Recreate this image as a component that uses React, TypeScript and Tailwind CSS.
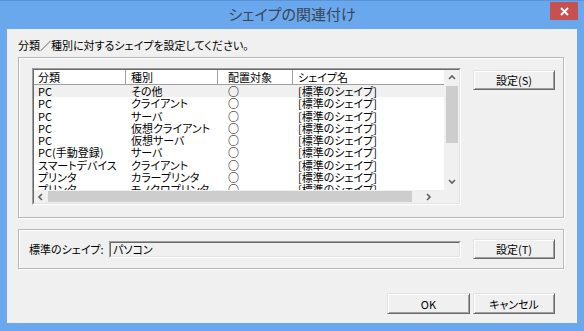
const rows = [
  { cat: 'PC', kind: 'その他' },
  { cat: 'PC', kind: 'クライアント' },
  { cat: 'PC', kind: 'サーバ' },
  { cat: 'PC', kind: '仮想クライアント' },
  { cat: 'PC', kind: '仮想サーバ' },
  { cat: 'PC(手動登録)', kind: 'サーバ' },
  { cat: 'スマートデバイス', kind: 'クライアント' },
  { cat: 'プリンタ', kind: 'カラープリンタ' },
  { cat: 'プリンタ', kind: 'モノクロプリンタ' },
]

const font = "font-['Noto_Sans_CJK_JP','Noto_Sans_CJK_SC',sans-serif] [font-feature-settings:'palt']"

function Chevron({ dir }: { dir: 'up' | 'down' | 'left' | 'right' }) {
  const d = {
    up: 'M1 5 L4 2 L7 5',
    down: 'M1 2 L4 5 L7 2',
    left: 'M5 1 L2 4 L5 7',
    right: 'M3 1 L6 4 L3 7',
  }[dir]
  return (
    <svg width="8" height="8" viewBox="0 0 8 8">
      <path d={d} fill="none" stroke="#606060" strokeWidth="1.6" />
    </svg>
  )
}

function Button({ label, w, h }: { label: string; w: string; h: string }) {
  return (
    <div
      className={`${w} ${h} flex items-center justify-center bg-[#f0f0f0] border border-t-[#e3e3e3] border-l-[#e3e3e3] border-r-[#696969] border-b-[#696969] shadow-[inset_1px_1px_0_#fff,inset_-1px_-1px_0_#a0a0a0] text-[11px] leading-[12px] text-black`}
    >
      {label}
    </div>
  )
}

export default function App() {
  return (
    <div className={`w-[584px] h-[331px] bg-[#6aa8ee] border-t border-[#5a92d8] flex flex-col ${font}`}>
      {/* Title bar */}
      <div className="relative h-[28px] flex items-center justify-center">
        <span className="text-[15px] text-[#3a4452] pb-[1px]">シェイプの関連付け</span>
        <div className="absolute right-[6px] top-[1px] w-[28px] h-[18px] bg-[#c75050] flex items-center justify-center">
          <svg width="9" height="9" viewBox="0 0 9 9">
            <path d="M1 1 L8 8 M8 1 L1 8" stroke="#fff" strokeWidth="2" />
          </svg>
        </div>
      </div>

      {/* Client area */}
      <div className="mx-[7px] mb-[8px] flex-1 bg-[#f0f0f0] flex flex-col text-[11px] leading-[12px] text-black">
        <div className="h-[28px] pt-[10px] pl-[11px] whitespace-nowrap">分類／種別に対するシェイプを設定してください。</div>

        {/* Group 1 */}
        <div className="ml-[11px] w-[546px] h-[161px] border border-[#b8b8b8] shadow-[inset_1px_1px_0_#fff,1px_1px_0_#fff] flex pl-[13px] pt-[10px]">
          <div className="w-[429px] h-[137px] border border-t-[#a0a0a0] border-l-[#a0a0a0] border-r-white border-b-white">
            <div className="w-full h-full border border-t-[#696969] border-l-[#696969] border-r-[#e3e3e3] border-b-[#e3e3e3] bg-white flex flex-col">
              <div className="flex flex-1 min-h-0">
                <div className="flex-1 flex flex-col overflow-hidden">
                  <div className="h-[15px] flex border-b border-[#a0a0a0] bg-white shrink-0 whitespace-nowrap">
                    <div className="w-[92px] pl-[4px] border-r border-[#a0a0a0] flex items-center">分類</div>
                    <div className="w-[92px] pl-[5px] border-r border-[#a0a0a0] flex items-center">種別</div>
                    <div className="w-[75px] pl-[10px] border-r border-[#a0a0a0] flex items-center">配置対象</div>
                    <div className="flex-1 pl-[5px] flex items-center">シェイプ名</div>
                  </div>
                  <div className="flex-1 overflow-hidden">
                    {rows.map((r, i) => (
                      <div
                        key={i}
                        className={`h-[12.25px] flex items-center whitespace-nowrap ${i === 0 ? 'bg-[#f0f0f0]' : 'bg-white'}`}
                      >
                        <div className="w-[92px] pl-[4px]">{r.cat}</div>
                        <div className="w-[92px] pl-[5px]">{r.kind}</div>
                        <div className="w-[75px] pl-[10px] text-[11px] leading-[12px] font-bold">○</div>
                        <div className="flex-1 pl-[5px]">[標準のシェイプ]</div>
                      </div>
                    ))}
                  </div>
                </div>
                {/* Vertical scrollbar */}
                <div className="w-[15px] bg-[#f0f0f0] flex flex-col items-center">
                  <div className="h-[16px] flex items-center justify-center">
                    <Chevron dir="up" />
                  </div>
                  <div className="w-[12px] h-[57px] bg-[#cdcdcd]" />
                  <div className="flex-1" />
                  <div className="h-[17px] flex items-center justify-center">
                    <Chevron dir="down" />
                  </div>
                </div>
              </div>
              {/* Horizontal scrollbar */}
              <div className="h-[13px] flex bg-[#f0f0f0] shrink-0">
                <div className="w-[14px] flex items-center justify-center">
                  <Chevron dir="left" />
                </div>
                <div className="w-[364px] my-[1px] bg-[#cdcdcd]" />
                <div className="flex-1 flex items-center justify-center">
                  <Chevron dir="right" />
                </div>
                <div className="w-[15px]" />
              </div>
            </div>
          </div>
          <div className="ml-[12px] mt-[2px]">
            <Button label="設定(S)" w="w-[82px]" h="h-[20px]" />
          </div>
        </div>

        {/* Group 2 */}
        <div className="ml-[11px] mt-[11px] w-[546px] h-[40px] border border-[#b8b8b8] shadow-[inset_1px_1px_0_#fff,1px_1px_0_#fff] flex items-center pl-[10px]">
          <div className="w-[80px] whitespace-nowrap">標準のシェイプ:</div>
          <div className="w-[352px] h-[17px] border border-t-[#a0a0a0] border-l-[#a0a0a0] border-r-white border-b-white">
            <div className="w-full h-full border border-t-[#696969] border-l-[#696969] border-r-[#e3e3e3] border-b-[#e3e3e3] flex items-center pl-[2px]">
              パソコン
            </div>
          </div>
          <div className="ml-[12px]">
            <Button label="設定(T)" w="w-[82px]" h="h-[20px]" />
          </div>
        </div>

        {/* Footer buttons */}
        <div className="mt-[24px] flex justify-end gap-[3px] pr-[22px]">
          <Button label="OK" w="w-[83px]" h="h-[21px]" />
          <Button label="キャンセル" w="w-[82px]" h="h-[21px]" />
        </div>
      </div>
    </div>
  )
}
